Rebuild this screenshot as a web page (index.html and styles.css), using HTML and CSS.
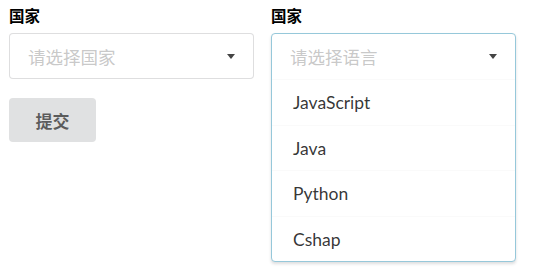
FILE: index.html
```html
<!DOCTYPE html>
<html lang="zh-CN">
<head>
    <meta charset="UTF-8">
    <meta name="viewport" content="width=device-width, initial-scale=1.0">
    <title>表单</title>
    <link rel="stylesheet" href="styles.css">
</head>
<body>
    <form class="form">
        <div class="field">
            <label class="label">国家</label>
            <div class="dropdown">
                <span class="text placeholder">请选择国家</span>
                <i class="caret"></i>
            </div>
        </div>
        <div class="field field-open">
            <label class="label">国家</label>
            <div class="dropdown active">
                <div class="head">
                    <span class="text placeholder">请选择语言</span>
                    <i class="caret"></i>
                </div>
                <div class="menu">
                    <div class="item">JavaScript</div>
                    <div class="item">Java</div>
                    <div class="item">Python</div>
                    <div class="item">Cshap</div>
                </div>
            </div>
        </div>
        <div class="actions">
            <button class="btn" type="button">提交</button>
        </div>
    </form>
</body>
</html>
```

FILE: styles.css
```css
*{
    margin: 0;
    padding: 0;
    box-sizing: border-box;
}
body{
    font-family: Lato, "Noto Sans CJK SC", sans-serif;
    color: rgba(0,0,0,.87);
    background: #fff;
}
.form{
    display: grid;
    grid-template-columns: 245px 245px;
    grid-template-rows: auto 1fr;
    column-gap: 17px;
    align-items: start;
    padding: 6px 9px;
}
.field-open{
    grid-row: span 2;
}
.label{
    display: block;
    font-size: 15.5px;
    font-weight: bold;
    line-height: 20px;
    color: #000;
    margin-bottom: 7px;
}
.dropdown{
    display: flex;
    align-items: center;
    justify-content: space-between;
    height: 46px;
    padding: 0 18px 0 18px;
    border: 1px solid rgba(34,36,38,.15);
    border-radius: 4px;
    background: #fff;
    font-size: 17.5px;
}
.dropdown.active{
    display: block;
    height: auto;
    padding: 0;
    border-color: #96c8da;
    box-shadow: 0 2px 3px 0 rgba(34,36,38,.15);
}
.head{
    display: flex;
    align-items: center;
    justify-content: space-between;
    height: 45px;
    padding: 0 18px;
}
.placeholder{
    color: rgba(191,191,191,.87);
}
.caret{
    width: 0;
    height: 0;
    border-left: 4px solid transparent;
    border-right: 4px solid transparent;
    border-top: 5px solid #444;
}
.item{
    height: 45.5px;
    line-height: 46px;
    padding: 0 21px;
    border-top: 1px solid #fafafa;
    font-size: 17.5px;
    color: rgba(0,0,0,.8);
}
.actions{
    grid-column: 1;
    grid-row: 2;
    padding-top: 19px;
}
.btn{
    width: 87px;
    height: 44px;
    border: none;
    border-radius: 4px;
    background: #e0e1e2;
    color: rgba(0,0,0,.6);
    font-family: Lato, "Noto Sans CJK SC", sans-serif;
    font-size: 17px;
    font-weight: bold;
}
```
